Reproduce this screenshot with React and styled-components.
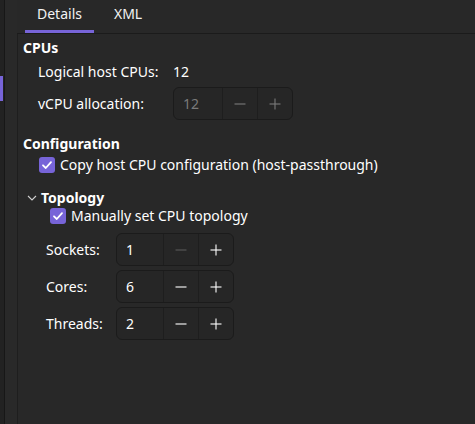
import { Fragment } from "react";
import styled, { createGlobalStyle } from "styled-components";

const GlobalStyle = createGlobalStyle`
  body {
    margin: 0;
    background: #282828;
    color: #ffffff;
    font-family: "Noto Sans", "DejaVu Sans", sans-serif;
    font-size: 14px;
  }
`;

const PURPLE = "#7764d8";

const Page = styled.div`
  display: flex;
  height: 424px;
  width: 475px;
  overflow: hidden;
`;

const Rail = styled.div`
  position: relative;
  width: 4px;
  background: #222222;
  border-right: 1px solid #171717;
`;

const RailMark = styled.div`
  position: absolute;
  left: 0;
  top: 76px;
  width: 3px;
  height: 25px;
  background: ${PURPLE};
`;

const Gutter = styled.div`
  width: 12px;
  background: #292929;
`;

const Main = styled.div`
  flex: 1;
  display: flex;
  flex-direction: column;
`;

const TabBar = styled.div`
  display: flex;
  gap: 8px;
  height: 33px;
  padding-left: 8px;
  border-bottom: 1px solid #1b1b1b;
`;

const Tab = styled.div`
  display: flex;
  align-items: center;
  padding: 0 12px 3px;
  border-bottom: 3px solid ${(p) => (p.$active ? PURPLE : "transparent")};
  color: #f2f2f2;
`;

const Panel = styled.div`
  flex: 1;
  border-left: 1px solid #1e1e1e;
  padding: 5px 0 0 5px;
  display: flex;
  flex-direction: column;
`;

const Heading = styled.div`
  font-weight: bold;
  line-height: 18px;
  margin-top: ${(p) => p.$mt || 0}px;
  margin-left: ${(p) => p.$ml || 0}px;
  display: flex;
  align-items: center;
  gap: 4px;
`;

const Form = styled.div`
  display: grid;
  grid-template-columns: ${(p) => p.$label}px auto;
  row-gap: ${(p) => p.$gap}px;
  align-items: center;
  justify-items: start;
  margin-top: ${(p) => p.$mt}px;
  margin-left: ${(p) => p.$ml}px;
`;

const Label = styled.div`
  line-height: 18px;
`;

const Value = styled.div`
  line-height: 18px;
`;

const Spin = styled.div`
  display: flex;
  height: 31px;
  border: 1px solid #1b1b1b;
  border-radius: 6px;
  background: #262626;
  color: ${(p) => (p.$disabled ? "#7a7a7a" : "#ffffff")};
`;

const SpinEntry = styled.div`
  width: ${(p) => p.$w}px;
  padding-left: 9px;
  box-sizing: border-box;
  display: flex;
  align-items: center;
  border-right: 1px solid #1e1e1e;
`;

const SpinButton = styled.div`
  width: 34px;
  display: flex;
  align-items: center;
  justify-content: center;
  color: ${(p) => (p.$dim ? "#5a5a5a" : "inherit")};
  & + & {
    border-left: 1px solid #1e1e1e;
  }
`;

const CheckRow = styled.div`
  display: flex;
  align-items: center;
  gap: 5px;
  line-height: 18px;
  margin-top: ${(p) => p.$mt || 0}px;
  margin-left: ${(p) => p.$ml}px;
`;

const Box = styled.div`
  width: 16px;
  height: 16px;
  border-radius: 3px;
  background: ${PURPLE};
  display: flex;
  align-items: center;
  justify-content: center;
`;

const Minus = () => (
  <svg width="12" height="12" viewBox="0 0 12 12">
    <line x1="0.5" y1="6" x2="11.5" y2="6" stroke="currentColor" strokeWidth="1.1" />
  </svg>
);

const Plus = () => (
  <svg width="12" height="12" viewBox="0 0 12 12">
    <line x1="0.5" y1="6" x2="11.5" y2="6" stroke="currentColor" strokeWidth="1.1" />
    <line x1="6" y1="0.5" x2="6" y2="11.5" stroke="currentColor" strokeWidth="1.1" />
  </svg>
);

const Check = () => (
  <svg width="12" height="12" viewBox="0 0 12 12">
    <path d="M2 6.3 L4.8 9 L10 3.2" fill="none" stroke="#fff" strokeWidth="1.8" strokeLinecap="round" strokeLinejoin="round" />
  </svg>
);

const Chevron = () => (
  <svg width="10" height="10" viewBox="0 0 10 10">
    <path d="M1 3 L5 7 L9 3" fill="none" stroke="#d0d0d0" strokeWidth="1.1" />
  </svg>
);

const SpinBox = ({ value, entry, disabled, minusOff }) => (
  <Spin $disabled={disabled}>
    <SpinEntry $w={entry}>{value}</SpinEntry>
    <SpinButton $dim={minusOff}>
      <Minus />
    </SpinButton>
    <SpinButton>
      <Plus />
    </SpinButton>
  </Spin>
);

const topology = [
  { label: "Sockets:", value: 1, minusOff: true },
  { label: "Cores:", value: 6 },
  { label: "Threads:", value: 2 },
];

export default function App() {
  return (
    <Page>
      <GlobalStyle />
      <Rail>
        <RailMark />
      </Rail>
      <Gutter />
      <Main>
        <TabBar>
          <Tab $active>Details</Tab>
          <Tab>XML</Tab>
        </TabBar>
        <Panel>
          <Heading>CPUs</Heading>
          <Form $label={135} $gap={6} $mt={6} $ml={15}>
            <Label>Logical host CPUs:</Label>
            <Value>12</Value>
            <Label>vCPU allocation:</Label>
            <SpinBox value={12} entry={49} disabled />
          </Form>
          <Heading $mt={15}>Configuration</Heading>
          <CheckRow $mt={3} $ml={16}>
            <Box>
              <Check />
            </Box>
            Copy host CPU configuration (host-passthrough)
          </CheckRow>
          <Heading $mt={15} $ml={4}>
            <Chevron />
            Topology
          </Heading>
          <CheckRow $ml={27}>
            <Box>
              <Check />
            </Box>
            Manually set CPU topology
          </CheckRow>
          <Form $label={70} $gap={4} $mt={8} $ml={23}>
            {topology.map((t) => (
              <Fragment key={t.label}>
                <Label>{t.label}</Label>
                <SpinBox value={t.value} entry={47} minusOff={t.minusOff} />
              </Fragment>
            ))}
          </Form>
        </Panel>
      </Main>
    </Page>
  );
}
